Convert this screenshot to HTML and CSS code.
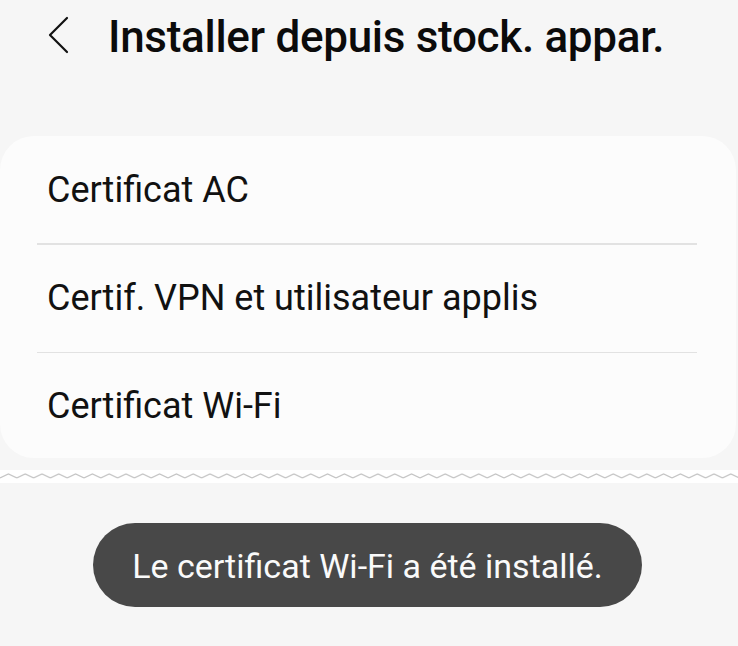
FILE: index.html
```html
<!DOCTYPE html>
<html lang="fr">
<head>
<meta charset="utf-8">
<title>Installer depuis stock. appar.</title>
<link rel="stylesheet" href="styles.css">
</head>
<body>
<div class="screen">
  <header class="header">
    <svg class="back" width="30" height="40" viewBox="0 0 30 40" aria-hidden="true">
      <polyline points="20,2 3,19 20,36" fill="none" stroke="#111" stroke-width="2.2" stroke-linecap="round" stroke-linejoin="round"/>
    </svg>
    <h1 class="title">Installer depuis stock. appar.</h1>
  </header>
  <section class="card">
    <div class="row">Certificat AC</div>
    <div class="divider"></div>
    <div class="row">Certif. VPN et utilisateur applis</div>
    <div class="divider"></div>
    <div class="row last">Certificat Wi-Fi</div>
  </section>
  <div class="tear">
    <svg width="738" height="13" viewBox="0 0 738 13" preserveAspectRatio="none" aria-hidden="true">
      <defs>
        <pattern id="zz" width="16.8" height="13" patternUnits="userSpaceOnUse">
          <polyline points="0,8 8.4,4 16.8,8" fill="none" stroke="#c4c4c4" stroke-width="1.2"/>
        </pattern>
      </defs>
      <rect x="0" y="0" width="738" height="13" fill="url(#zz)"/>
    </svg>
  </div>
  <div class="toast-area">
    <div class="toast">Le certificat Wi-Fi a été installé.</div>
  </div>
</div>
</body>
</html>
```
FILE: styles.css
```css
html, body {
  margin: 0;
  padding: 0;
  background: #f6f6f6;
}
body {
  font-family: Roboto, "Noto Sans", "Liberation Sans", sans-serif;
  color: #111;
  width: 738px;
  height: 646px;
  overflow: hidden;
}
.screen {
  display: flex;
  flex-direction: column;
}
.header {
  display: flex;
  align-items: center;
  height: 74px;
  padding-left: 47px;
}
.back {
  display: block;
  margin-top: -2px;
}
.title {
  margin: 0 0 0 31px;
  font-size: 44px;
  font-weight: 500;
  color: #0b0b0b;
  line-height: 74px;
  letter-spacing: -0.3px;
}
.card {
  margin: 62px 2px 0 0;
  background: #fcfcfc;
  border-radius: 34px;
  display: flex;
  flex-direction: column;
}
.row {
  height: 107px;
  display: flex;
  align-items: center;
  padding-left: 47px;
  font-size: 36px;
  color: #111;
}
.row.last {
  height: 105px;
}
.divider {
  height: 1.5px;
  background: #e2e2e2;
  margin: 0 39px 0 37px;
}
.tear {
  margin-top: 12px;
  height: 13px;
  background: #ffffff;
}
.tear svg {
  display: block;
}
.toast-area {
  display: flex;
  justify-content: center;
  padding-top: 40px;
}
.toast {
  width: 549px;
  height: 84px;
  border-radius: 42px;
  background: #484848;
  color: #fafafa;
  font-size: 34px;
  display: flex;
  align-items: center;
  justify-content: center;
  margin-right: 3px;
  padding-top: 1px;
  box-sizing: border-box;
}
```
